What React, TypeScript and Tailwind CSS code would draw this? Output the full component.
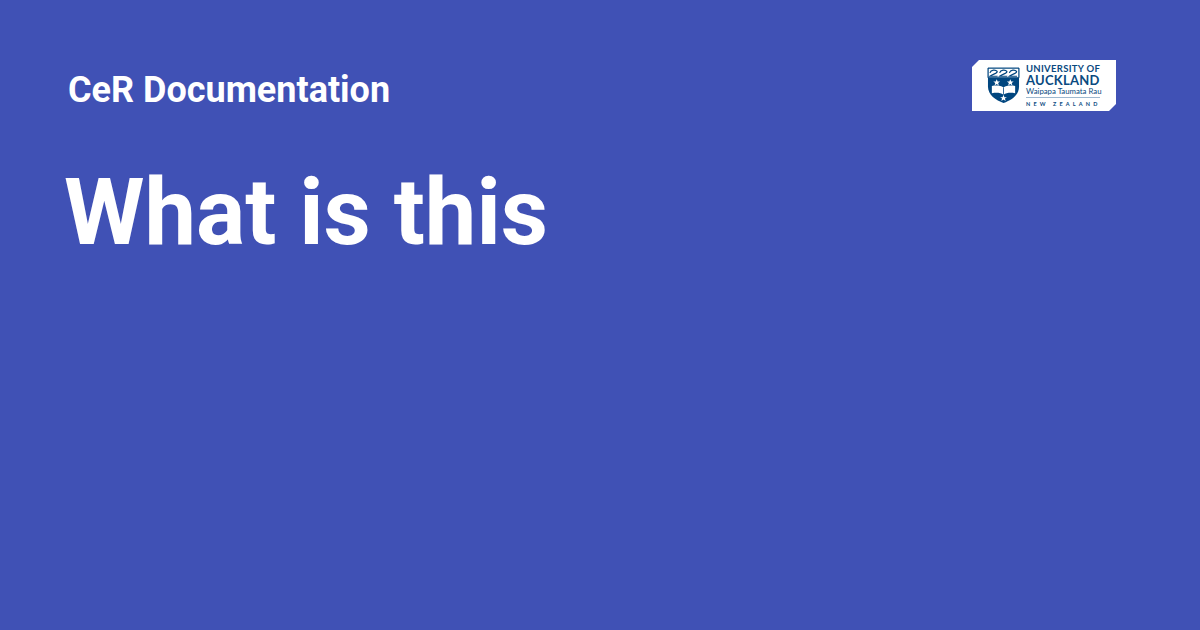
function CrestLogo() {
  return (
    <svg width="33" height="37" viewBox="0 0 34 38" className="shrink-0">
      <path d="M1 1H33V20C33 29 25 34 17 37C9 34 1 29 1 20Z" fill="#00467f" />
      <path d="M1.5 1.5H32.5V11H1.5Z" fill="#ffffff" />
      <path d="M1 1H33V11H1Z" fill="none" stroke="#00467f" strokeWidth="1" />
      <path d="M3 6C4 2.5 9 2.5 10.5 4.5C10.5 7 6 7 3 9.5H11" fill="none" stroke="#00467f" strokeWidth="1.2" />
      <path d="M13 6C14 2.5 19 2.5 20.5 4.5C20.5 7 16 7 13 9.5H21" fill="none" stroke="#00467f" strokeWidth="1.2" />
      <path d="M23 6C24 2.5 29 2.5 30.5 4.5C30.5 7 26 7 23 9.5H31" fill="none" stroke="#00467f" strokeWidth="1.2" />
      <path d="M10 12.5L11 15H13.5L11.5 16.5L12.2 19L10 17.5L7.8 19L8.5 16.5L6.5 15H9Z" fill="#ffffff" />
      <path d="M24 12.5L25 15H27.5L25.5 16.5L26.2 19L24 17.5L21.8 19L22.5 16.5L20.5 15H23Z" fill="#ffffff" />
      <path d="M5 19.5C10 18.5 14 19 17 21C20 19 24 18.5 29 19.5V27C24 26 20 26.5 17 28.5C14 26.5 10 26 5 27Z" fill="#ffffff" />
      <path d="M17 21V28.5" stroke="#00467f" strokeWidth="0.8" />
      <path d="M17 28.5L18 31H20.5L18.5 32.5L19.2 35L17 33.5L14.8 35L15.5 32.5L13.5 31H16Z" fill="#ffffff" />
    </svg>
  );
}

function UniversityLogo() {
  return (
    <div className="mt-[8px] flex h-[51px] w-[144px] items-center gap-[6px] bg-white pl-[15px] [clip-path:polygon(7px_0,100%_0,100%_calc(100%-7px),calc(100%-7px)_100%,0_100%,0_7px)]">
      <CrestLogo />
      <div className="flex w-[74px] flex-col font-['Lato',sans-serif] text-[#0a4a80]">
        <span className="text-[9.5px] leading-[10px] font-bold tracking-[0.3px] whitespace-nowrap">UNIVERSITY OF</span>
        <span className="text-[13px] leading-[12px] font-bold tracking-[0.25px] whitespace-nowrap">AUCKLAND</span>
        <span className="border-b border-[#9db8cf] pb-[1px] text-[7.8px] leading-[10px] whitespace-nowrap">
          Waipapa Taumata Rau
        </span>
        <span className="mt-[3px] text-[5.5px] leading-[6px] font-bold tracking-[3.15px] whitespace-nowrap">NEW ZEALAND</span>
      </div>
    </div>
  );
}

export default function App() {
  return (
    <div className="h-[630px] w-[1200px] overflow-hidden bg-[#4051b5] pt-[52px] pr-[84px] pl-[68px] font-['Roboto',sans-serif] text-white">
      <div className="flex items-start justify-between">
        <div className="mt-[1px] text-[36px] leading-[74px] font-bold whitespace-nowrap">CeR Documentation</div>
        <UniversityLogo />
      </div>
      <h1 className="-ml-[4px] mt-[31px] text-[92px] leading-[110px] font-bold">What is this</h1>
    </div>
  );
}
